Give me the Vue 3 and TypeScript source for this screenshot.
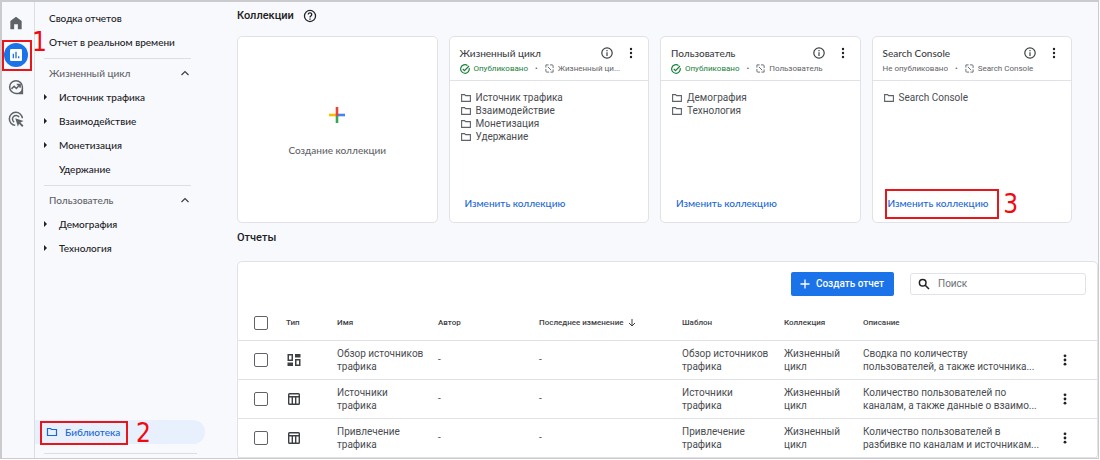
<script setup lang="ts">
import { ref } from 'vue'

interface NavItem {
  label: string
  expandable: boolean
}
interface NavSection {
  title: string
  items: NavItem[]
}
interface Collection {
  title: string
  published: boolean
  template: string
  topics: string[]
  marked?: boolean
}
interface Report {
  kind: 'overview' | 'detail'
  name: string
  collection: string
  description: string[]
}

const sections: NavSection[] = [
  {
    title: 'Жизненный цикл',
    items: [
      { label: 'Источник трафика', expandable: true },
      { label: 'Взаимодействие', expandable: true },
      { label: 'Монетизация', expandable: true },
      { label: 'Удержание', expandable: false },
    ],
  },
  {
    title: 'Пользователь',
    items: [
      { label: 'Демография', expandable: true },
      { label: 'Технология', expandable: true },
    ],
  },
]

const collections: Collection[] = [
  {
    title: 'Жизненный цикл',
    published: true,
    template: 'Жизненный ци...',
    topics: ['Источник трафика', 'Взаимодействие', 'Монетизация', 'Удержание'],
  },
  { title: 'Пользователь', published: true, template: 'Пользователь', topics: ['Демография', 'Технология'] },
  { title: 'Search Console', published: false, template: 'Search Console', topics: ['Search Console'], marked: true },
]

const reports: Report[] = [
  {
    kind: 'overview',
    name: 'Обзор источников трафика',
    collection: 'Жизненный цикл',
    description: ['Сводка по количеству', 'пользователей, а также источника...'],
  },
  {
    kind: 'detail',
    name: 'Источники трафика',
    collection: 'Жизненный цикл',
    description: ['Количество пользователей по', 'каналам, а также данные о взаимо...'],
  },
  {
    kind: 'detail',
    name: 'Привлечение трафика',
    collection: 'Жизненный цикл',
    description: ['Количество пользователей в', 'разбивке по каналам и источникам...'],
  },
]

const query = ref('')
</script>

<template>
  <div class="shell">
    <nav class="rail" aria-label="Разделы">
      <button class="rail-btn" aria-label="Главная">
        <svg viewBox="0 0 24 24" width="16" height="16"><path fill="#5f6368" d="M12 2.500 3.500 9v12.500h5.700V14h5.600v7.500h5.700V9z" /></svg>
      </button>
      <button class="rail-btn" aria-label="Отчеты">
        <span class="rail-active">
          <svg viewBox="0 0 24 24" width="16" height="16">
            <rect x="3" y="3" width="18" height="18" rx="2" fill="#fff" />
            <path stroke="#1a73e8" stroke-width="2" d="M8 17v-7M12 17V7M16 17v-3" />
          </svg>
        </span>
        <span class="mark mark-rail"><b>1</b></span>
      </button>
      <button class="rail-btn" aria-label="Исследования">
        <svg viewBox="0 0 24 24" width="18" height="18" fill="none" stroke="#5f6368" stroke-width="2">
          <path d="M20.500 12A8.500 8.500 0 1 0 12 20.500h8.500z" />
          <path d="M20.500 13v7.500H13q6-1 7.500-7.500z" fill="#5f6368" stroke="none" />
          <path d="m6 14.500 3.500-3.500 3 3 4.500-5M13 8.500h4.500V13" />
        </svg>
      </button>
      <button class="rail-btn" aria-label="Реклама">
        <svg viewBox="0 0 24 24" width="18" height="18" fill="none" stroke="#5f6368" stroke-width="2">
          <path d="M11 20.500A8.700 8.700 0 1 1 20.500 11" />
          <path d="M9.600 16.200A4.800 4.800 0 1 1 16.200 9.600" />
          <path d="m11 11 11 3.800-4.200 1.700 4.200 4.200-1.800 1.800-4.200-4.200-1.500 4z" fill="#5f6368" stroke="none" />
        </svg>
      </button>
      <button class="rail-btn rail-admin" aria-label="Администратор">
        <svg viewBox="0 0 24 24" width="16" height="16">
          <path fill="#5f6368" d="M9.500 2h5l.5 3 2 1 3-1 2.500 4-2.500 2v2l2.500 2-2.500 4-3-1-2 1-.5 3h-5L9 19l-2-1-3 1-2.500-4L4 13v-2L1.500 9 4 5l3 1 2-1z" />
        </svg>
      </button>
    </nav>

    <aside class="side">
      <a class="side-link" href="#">Сводка отчетов</a>
      <a class="side-link" href="#">Отчет в реальном времени</a>
      <template v-for="section in sections" :key="section.title">
        <hr class="side-rule" />
        <button class="side-section" aria-expanded="true">
          {{ section.title }}
          <svg viewBox="0 0 10 10" width="10" height="10"><path d="M1.500 7 5 3.500 8.500 7" fill="none" stroke="#3c4043" stroke-width="1.200" /></svg>
        </button>
        <a v-for="item in section.items" :key="item.label" class="side-item" href="#">
          <span class="side-caret"><i v-if="item.expandable"></i></span>
          {{ item.label }}
        </a>
      </template>
      <div class="side-foot">
        <a class="library" href="#">
          <svg viewBox="0 0 12 12" width="12" height="12"><path d="M1.500 2.500h3l1 1h5v6h-9z" fill="none" stroke="#1967d2" stroke-width="1.200" /></svg>
          Библиотека
          <span class="mark mark-library"><b>2</b></span>
        </a>
        <hr class="foot-rule" />
      </div>
    </aside>

    <main class="main">
      <h2 class="heading">
        Коллекции
        <svg viewBox="0 0 24 24" width="14" height="14" fill="none" stroke="#202124" stroke-width="2.200">
          <circle cx="12" cy="12" r="9.500" />
          <path d="M9 9.500a3 3 0 1 1 4.500 2.600q-1.500 1-1.500 2.400" />
          <path d="M12 16.200v2.300" />
        </svg>
      </h2>

      <div class="cards">
        <button class="card create">
          <svg viewBox="0 0 16 16" width="16" height="16">
            <path fill="#fbbc04" d="M0 6.700h7v2.600H0z" />
            <path fill="#4285f4" d="M9 6.700h7v2.600H9z" />
            <path fill="#ea4335" d="M6.700 0h2.600v9H6.700z" />
            <path fill="#34a853" d="M6.700 9h2.600v7H6.700z" />
          </svg>
          Создание коллекции
        </button>

        <section v-for="c in collections" :key="c.title" class="card">
          <header class="card-head">
            <div class="card-title">
              <h3>{{ c.title }}</h3>
              <button class="icon-btn" aria-label="Сведения">
                <svg viewBox="0 0 12 12" width="12" height="12">
                  <circle cx="6" cy="6" r="5.200" fill="none" stroke="#3c4043" stroke-width="1.200" />
                  <path fill="#3c4043" d="M5.400 5.200h1.200V9H5.400zM5.400 3h1.200v1.200H5.400z" />
                </svg>
              </button>
              <button class="icon-btn" aria-label="Ещё">
                <svg viewBox="0 0 12 12" width="12" height="12" fill="#202124">
                  <circle cx="6" cy="2" r="1.200" /><circle cx="6" cy="6" r="1.200" /><circle cx="6" cy="10" r="1.200" />
                </svg>
              </button>
            </div>
            <p class="card-meta">
              <span v-if="c.published" class="published">
                <svg viewBox="0 0 10 10" width="10" height="10" fill="none" stroke="#188038" stroke-width="1.200">
                  <path d="M9.200 4.200A4.300 4.300 0 1 1 7.500 1.500" /><path d="m2.800 5 1.700 1.700L9 2" />
                </svg>
                Опубликовано
              </span>
              <span v-else>Не опубликовано</span>
              <span class="dot">•</span>
              <span class="template">
                <svg viewBox="0 0 10 10" width="9" height="9" fill="none" stroke="#5f6368" stroke-width="1">
                  <path d="M1 4V1h3M5.500 1H8q1 0 1 1v2.500M9 6v3H6M4.500 9H2Q1 9 1 8V5.500M3.200 3.200l3.600 3.600" />
                </svg>
                {{ c.template }}
              </span>
            </p>
          </header>
          <ul class="topics">
            <li v-for="t in c.topics" :key="t">
              <svg viewBox="0 0 10 10" width="10" height="10"><path d="M.6 1.600h3l1 1h4.800v5.800H.6z" fill="none" stroke="#5f6368" stroke-width="1.100" /></svg>
              {{ t }}
            </li>
          </ul>
          <button class="edit">
            Изменить коллекцию
            <span v-if="c.marked" class="mark mark-edit"><b>3</b></span>
          </button>
        </section>
      </div>

      <h2 class="heading reports-heading">Отчеты</h2>

      <section class="reports">
        <div class="toolbar">
          <button class="primary">
            <svg viewBox="0 0 10 10" width="10" height="10"><path d="M5 .5v9M.5 5h9" stroke="#fff" stroke-width="1.300" /></svg>
            Создать отчет
          </button>
          <label class="search">
            <svg viewBox="0 0 12 12" width="12" height="12" fill="none" stroke="#202124" stroke-width="1.500">
              <circle cx="4.700" cy="4.700" r="3.300" /><path d="m7.200 7.200 3.800 3.800" />
            </svg>
            <input v-model="query" type="text" placeholder="Поиск" aria-label="Поиск" />
          </label>
        </div>

        <table>
          <colgroup>
            <col class="c-check" /><col class="c-type" /><col class="c-name" /><col class="c-author" /><col class="c-date" />
            <col class="c-template" /><col class="c-coll" /><col /><col class="c-menu" />
          </colgroup>
          <thead>
            <tr>
              <th class="check"><input type="checkbox" aria-label="Выбрать все" /></th>
              <th>Тип</th>
              <th>Имя</th>
              <th>Автор</th>
              <th>
                <span class="sorted">
                  Последнее изменение
                  <svg viewBox="0 0 8 8" width="8" height="8" fill="none" stroke="#3c4043"><path d="M4 0v7M1 4l3 3 3-3" /></svg>
                </span>
              </th>
              <th>Шаблон</th>
              <th>Коллекция</th>
              <th>Описание</th>
              <th></th>
            </tr>
          </thead>
          <tbody>
            <tr v-for="r in reports" :key="r.name">
              <td class="check"><input type="checkbox" :aria-label="r.name" /></td>
              <td>
                <svg v-if="r.kind === 'overview'" viewBox="0 0 16 16" width="16" height="16" fill="#3c4043">
                  <path fill-rule="evenodd" d="M1.500 2H7v7H1.500zM3 3.500v4h2.500v-4zM9 7h5.500v7H9zM10.500 8.500v4H13v-4z" />
                  <path d="M9 2h5.500v3.500H9zM1.500 10.500H7V14H1.500z" />
                </svg>
                <svg v-else viewBox="0 0 16 16" width="16" height="16" fill="none" stroke="#3c4043" stroke-width="1.400">
                  <rect x="2.700" y="2.700" width="10.600" height="10.600" rx=".8" />
                  <path d="M2.700 5.700h10.600M6.300 5.700v7.600M9.700 5.700v7.600" />
                </svg>
              </td>
              <td>{{ r.name }}</td>
              <td>-</td>
              <td>-</td>
              <td>{{ r.name }}</td>
              <td>{{ r.collection }}</td>
              <td class="desc"><span v-for="line in r.description" :key="line">{{ line }}</span></td>
              <td>
                <button class="icon-btn" aria-label="Действия">
                  <svg viewBox="0 0 12 12" width="12" height="12" fill="#202124">
                    <circle cx="6" cy="1.800" r="1.400" /><circle cx="6" cy="6" r="1.400" /><circle cx="6" cy="10.200" r="1.400" />
                  </svg>
                </button>
              </td>
            </tr>
          </tbody>
        </table>
      </section>
    </main>
  </div>
</template>

<style>
body {
  background: #fff;
}
</style>

<style scoped>
* {
  box-sizing: border-box;
}
.shell {
  display: flex;
  height: calc(100vh - 1px);
  margin-right: 1px;
  overflow: hidden;
  border: 2px solid #cbcbce;
  border-width: 2px 1px 1px 2px;
  background: #f8f9fc;
  color: #202124;
  font: 10px/13px Roboto, sans-serif;
}
button {
  padding: 0;
  border: 0;
  background: none;
  font: inherit;
  color: inherit;
  cursor: pointer;
}
a {
  color: inherit;
  text-decoration: none;
}
svg {
  display: block;
  flex: none;
}
hr {
  height: 1px;
  border: 0;
  background: #dcdee2;
}

.rail {
  display: flex;
  flex: none;
  flex-direction: column;
  width: 33px;
  padding-top: 5px;
  border-right: 1px solid #dcdee2;
}
.rail-btn {
  position: relative;
  display: flex;
  flex: none;
  align-items: center;
  justify-content: center;
  width: 28px;
  height: 32px;
}
.rail-active {
  display: flex;
  align-items: center;
  justify-content: center;
  width: 24px;
  height: 24px;
  border-radius: 50%;
  background: #1a73e8;
}
.rail-admin {
  margin: auto 0 -23px;
}

.mark {
  position: absolute;
  border: 2px solid #e8161b;
  pointer-events: none;
}
.mark b {
  position: absolute;
  left: 100%;
  color: #f00a10;
  font: 26px/24px 'DejaVu Sans Condensed', 'DejaVu Sans', sans-serif;
}
.mark-rail {
  inset: 1px -2px 0 0;
}
.mark-rail b {
  top: -12px;
  margin-left: 2px;
}
.mark-library {
  inset: 1px auto -1px 5px;
  width: 88px;
}
.mark-library b {
  top: -2px;
  margin-left: 10px;
}
.mark-edit {
  inset: -7px -11px -9px -3px;
}
.mark-edit b {
  top: 1px;
  margin-left: 6px;
}

.side {
  display: flex;
  flex: none;
  flex-direction: column;
  width: 170px;
  padding-top: 4px;
  font: 500 10px/24px Lato, sans-serif;
}
.side-link {
  padding-left: 14px;
}
.side-rule {
  width: 147px;
  margin: 4px 0 2px 9px;
}
.side-section {
  display: flex;
  align-items: center;
  justify-content: space-between;
  height: 24px;
  padding: 0 15px 0 14px;
  color: #5f6368;
}
.side-item {
  display: flex;
  align-items: center;
  padding-left: 9px;
}
.side-caret {
  width: 15px;
}
.side-caret i {
  display: block;
  width: 0;
  border: 3px solid transparent;
  border-left-color: #202124;
  border-right: 0;
}
.side-foot {
  margin-top: auto;
}
.library {
  position: relative;
  display: flex;
  align-items: center;
  gap: 7px;
  padding-left: 11px;
  border-radius: 0 12px 12px 0;
  background: #e8f0fe;
  color: #1967d2;
}
.foot-rule {
  width: 153px;
  margin: 9px 0 4px 9px;
}

.main {
  flex: 1;
  min-width: 0;
  padding-left: 32px;
}
.heading {
  display: flex;
  align-items: center;
  gap: 9px;
  height: 28px;
  margin: 0 0 6px;
  font: 500 11px/28px Roboto, sans-serif;
}
.reports-heading {
  margin: 1px 0 9px;
}
.cards {
  display: grid;
  grid-template-columns: repeat(4, 1fr);
  gap: 11px;
  padding-right: 26px;
}
.card {
  display: flex;
  flex-direction: column;
  min-width: 0;
  min-height: 187px;
  border: 1px solid #e0e2e7;
  border-radius: 5px;
  background: #fff;
}
.create {
  align-items: center;
  justify-content: center;
  gap: 20px;
  padding-top: 5px;
  color: #5f6368;
  font: 500 10px/14px Lato, sans-serif;
}
.card-head {
  height: 44px;
  padding: 9px 11px 0 10px;
  border-bottom: 1px solid #e0e2e7;
}
.card-title {
  display: flex;
  align-items: center;
  gap: 12px;
}
.card-title h3 {
  flex: 1;
  margin: 0;
  color: #3c4043;
  font: 500 10px/14px Lato, sans-serif;
}
.card-meta {
  display: flex;
  align-items: center;
  gap: 7px;
  margin: 1px 0 0;
  color: #5f6368;
  font-size: 8px;
  line-height: 15px;
  white-space: nowrap;
}
.published,
.template {
  display: flex;
  align-items: center;
  gap: 4px;
}
.published {
  color: #188038;
}
.topics {
  margin: 0;
  padding: 10px 11px 0;
  list-style: none;
  color: #4a4d51;
}
.topics li {
  display: flex;
  align-items: center;
  gap: 5px;
}
.edit {
  position: relative;
  align-self: flex-start;
  margin: auto 0 12px 15px;
  color: #1967d2;
  font: 500 10px/14px Lato, sans-serif;
}

.reports {
  border: 1px solid #e0e2e7;
  border-radius: 5px;
  background: #fff;
}
.toolbar {
  display: flex;
  align-items: center;
  justify-content: flex-end;
  gap: 16px;
  padding: 10px 11px;
}
.primary {
  display: flex;
  align-items: center;
  gap: 6px;
  height: 24px;
  padding: 0 10px 0 9px;
  border-radius: 2px;
  background: #1a73e8;
  color: #fff;
  font: 500 10px/24px Roboto, sans-serif;
}
.search {
  display: flex;
  align-items: center;
  gap: 8px;
  width: 176px;
  height: 22px;
  padding: 0 7px;
  border: 1px solid #dfe2e8;
  border-radius: 3px;
}
.search input {
  flex: 1;
  min-width: 0;
  padding: 0;
  border: 0;
  outline: 0;
  background: none;
  color: #202124;
  font: 10px/20px Roboto, sans-serif;
}
.search input::placeholder {
  color: #6b6f74;
}
table {
  width: 100%;
  border-collapse: collapse;
  table-layout: fixed;
}
.c-check {
  width: 48px;
}
.c-type {
  width: 51px;
}
.c-name,
.c-author {
  width: 101px;
}
.c-date {
  width: 143px;
}
.c-template {
  width: 102px;
}
.c-coll {
  width: 79px;
}
.c-menu {
  width: 38px;
}
th,
td {
  height: 39px;
  padding: 0;
  border-bottom: 1px solid #e0e2e7;
  text-align: left;
  vertical-align: middle;
}
th {
  height: 34px;
  color: #3c4043;
  font: 500 8px/13px Roboto, sans-serif;
}
td {
  padding-right: 10px;
  color: #4a4d51;
}
td.desc {
  padding-right: 0;
}
.desc span {
  display: block;
  white-space: nowrap;
}
.check {
  padding: 0 0 0 16px;
}
.check input {
  display: block;
  width: 14px;
  height: 14px;
  margin: 0;
  appearance: none;
  border: 1px solid #5f6368;
  border-radius: 2px;
  background: #fff;
}
.check input:checked {
  background: #1a73e8;
}
.sorted {
  display: flex;
  align-items: center;
  gap: 4px;
}
.icon-btn {
  display: block;
}
</style>
